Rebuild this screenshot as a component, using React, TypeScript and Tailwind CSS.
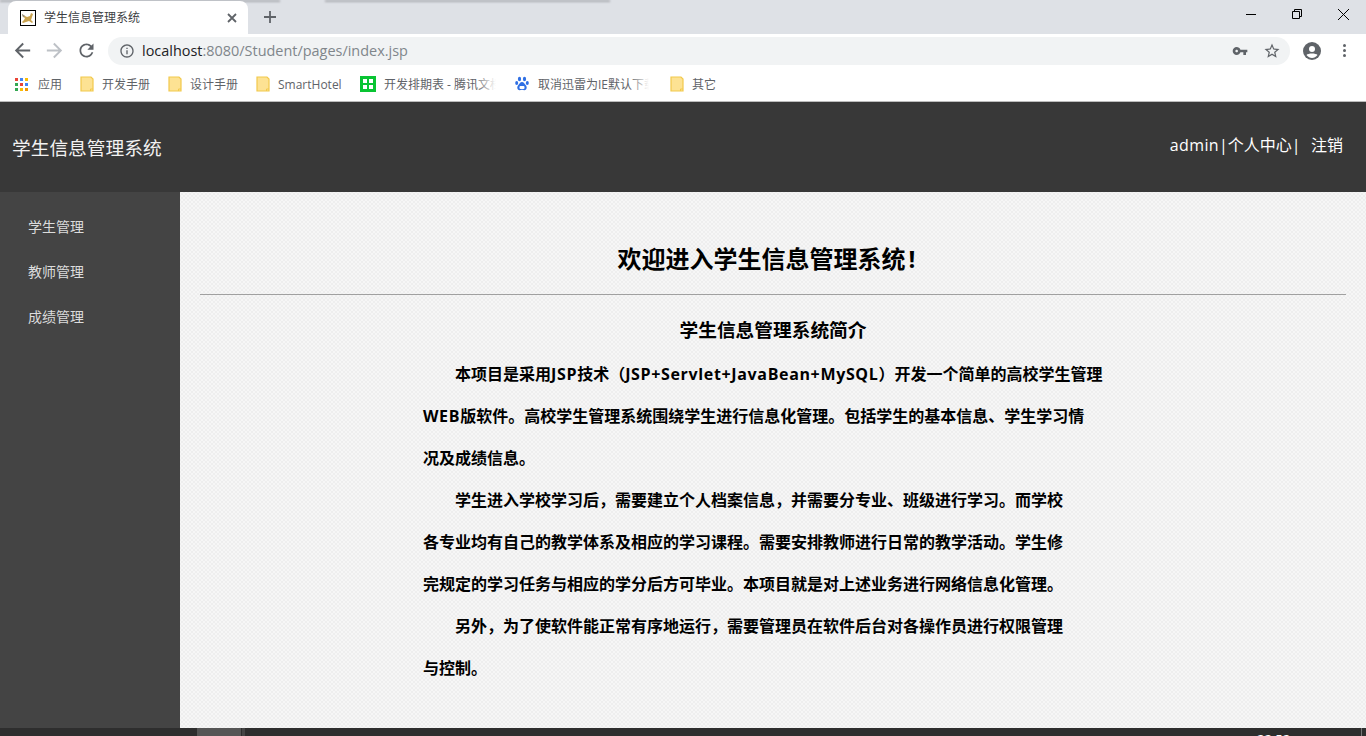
import React from 'react';

const cjk = "font-['Open_Sans','Noto_Sans_CJK_SC',sans-serif]";

const paragraphs = [
  [
    '本项目是采用JSP技术（JSP+Servlet+JavaBean+MySQL）开发一个简单的高校学生管理',
    'WEB版软件。高校学生管理系统围绕学生进行信息化管理。包括学生的基本信息、学生学习情',
    '况及成绩信息。',
  ],
  [
    '学生进入学校学习后，需要建立个人档案信息，并需要分专业、班级进行学习。而学校',
    '各专业均有自己的教学体系及相应的学习课程。需要安排教师进行日常的教学活动。学生修',
    '完规定的学习任务与相应的学分后方可毕业。本项目就是对上述业务进行网络信息化管理。',
  ],
  ['另外，为了使软件能正常有序地运行，需要管理员在软件后台对各操作员进行权限管理', '与控制。'],
];

const Icon = ({ d, size, className }: { d: string; size: number; className?: string }) => (
  <svg width={size} height={size} viewBox="0 0 24 24" fill="currentColor" className={`shrink-0 ${className ?? ''}`}>
    <path d={d} />
  </svg>
);

const Line = ({ d, size, width = 1 }: { d: string; size: number; width?: number }) => (
  <svg width={size} height={size} viewBox={`0 0 ${size} ${size}`} fill="none" stroke="currentColor" strokeWidth={width} className="shrink-0">
    <path d={d} />
  </svg>
);

const backPath = 'M20 11H7.830l5.590-5.590L12 4l-8 8 8 8 1.410-1.410L7.830 13H20v-2z';
const forwardPath = 'M4 11h12.170l-5.590-5.590L12 4l8 8-8 8-1.410-1.410L16.170 13H4v-2z';
const reloadPath =
  'M17.650 6.350C16.200 4.900 14.210 4 12 4c-4.420 0-7.990 3.580-7.990 8s3.570 8 7.990 8c3.730 0 6.840-2.550 7.730-6h-2.080c-.82 2.330-3.040 4-5.650 4-3.310 0-6-2.690-6-6s2.690-6 6-6c1.660 0 3.140.69 4.220 1.780L13 11h7V4l-2.350 2.350z';
const infoPath =
  'M11 7h2v2h-2zm0 4h2v6h-2zm1-9C6.480 2 2 6.480 2 12s4.480 10 10 10 10-4.480 10-10S17.520 2 12 2zm0 18c-4.410 0-8-3.590-8-8s3.590-8 8-8 8 3.590 8 8-3.590 8-8 8z';
const starPath =
  'M22 9.240l-7.190-.62L12 2 9.190 8.630 2 9.240l5.460 4.730L5.820 21 12 17.270 18.180 21l-1.630-7.030L22 9.240zM12 15.400l-3.760 2.270 1-4.280-3.320-2.880 4.380-.38L12 6.100l1.710 4.040 4.380.38-3.320 2.880 1 4.280L12 15.400z';
const keyPath =
  'M12.650 10C11.830 7.670 9.610 6 7 6c-3.310 0-6 2.690-6 6s2.690 6 6 6c2.610 0 4.830-1.670 5.650-4H17v4h4v-4h2v-4H12.650zM7 14c-1.100 0-2-.9-2-2s.9-2 2-2 2 .9 2 2-.9 2-2 2z';

const Folder = () => (
  <svg width="14" height="16" viewBox="0 0 14 16" className="shrink-0">
    <path d="M1 1h10l2 2v12H1z" fill="#fde293" stroke="#f2c94c" strokeWidth="1.200" />
    <path d="M10.500 15v-2h2.500" fill="none" stroke="#f2c94c" />
  </svg>
);

const AppsIcon = () => {
  const colors = ['#ea4335', '#4285f4', '#fbbc04', '#34a853', '#ea4335', '#4285f4', '#34a853', '#fbbc04', '#f29900'];
  return (
    <div className="grid grid-cols-3 gap-[2px] w-[13px] shrink-0 mr-[2px]">
      {colors.map((c, i) => (
        <span key={i} className="w-[3px] h-[3px]" style={{ backgroundColor: c }} />
      ))}
    </div>
  );
};

const GreenGrid = () => (
  <div className="w-4 h-4 bg-[#09c433] grid grid-cols-2 gap-[2px] p-[3px] shrink-0">
    <span className="bg-white" />
    <span className="bg-white" />
    <span className="bg-white" />
    <span className="bg-white" />
  </div>
);

const Paw = () => (
  <svg width="14" height="16" viewBox="0 0 14 16" className="shrink-0 mr-[1px]">
    <g fill="#2f6fe4">
      <ellipse cx="4.500" cy="3" rx="1.600" ry="2.300" />
      <ellipse cx="9.500" cy="3" rx="1.600" ry="2.300" />
      <ellipse cx="1.700" cy="7" rx="1.500" ry="2" />
      <ellipse cx="12.300" cy="7" rx="1.500" ry="2" />
      <path d="M7 6c2 0 2.500 2 4 3.500 1.500 2 .5 5-2 4.700-1-.1-1.300-.4-2-.4s-1 .3-2 .4c-2.500.3-3.500-2.700-2-4.700C4.500 8 5 6 7 6z" />
    </g>
    <rect x="4.500" y="10" width="5" height="3" rx="1" fill="#fff" />
  </svg>
);

const Bookmark = ({ icon, label, width, fade }: { icon: React.ReactNode; label: string; width: number; fade?: boolean }) => (
  <div className="flex items-center gap-2 overflow-hidden relative" style={{ width }}>
    {icon}
    <span className="text-xs text-[#5f6368] whitespace-nowrap pt-[2px]">{label}</span>
    {fade && <span className="absolute right-0 top-0 bottom-0 w-5 bg-gradient-to-r from-transparent to-white" />}
  </div>
);

// latin runs sit a bit tighter in Open Sans than in the reference
const BodyLine = ({ text }: { text: string }) => (
  <>
    {text.split(/([A-Za-z+]+)/).map((part, i) =>
      i % 2 === 1 ? (
        <span key={i} className="tracking-[0.65px]">
          {part}
        </span>
      ) : (
        part
      )
    )}
  </>
);

const App = () => {
  return (
    <div className={`w-[1366px] h-[736px] overflow-hidden flex flex-col bg-white [text-spacing-trim:space-all] ${cjk}`}>
      {/* tab strip */}
      <div className="h-[34px] bg-[#dee1e6] flex items-end pl-2 relative shrink-0">
        <div className="absolute left-0 top-0 w-[280px] h-[2px] bg-[#a9abb0] blur-[1px]" />
        <div className="absolute left-[325px] top-0 w-[285px] h-[2px] bg-[#a9abb0] blur-[1px]" />
        <div className="w-[240px] h-[33px] bg-white rounded-t-lg flex items-center pl-[12px] pr-[10px] relative">
          <div className="w-4 h-4 border border-black bg-white shrink-0 flex items-center justify-center overflow-hidden">
            <svg width="14" height="14" viewBox="0 0 14 14">
              <path d="M1 3l3 2 2 1 3-1 1-3 2 1-1 3-1 3 2 2-1 1-3-2-3 1-3 1-1-1 2-2 1-2-2-1z" fill="#c9a24e" />
              <path d="M1 3l3 2-2 1z" fill="#8a8a8a" />
            </svg>
          </div>
          <span className="ml-2 text-xs text-[#3c4043] whitespace-nowrap">学生信息管理系统</span>
          <span className="ml-auto text-[#5f6368]">
            <Line size={12} width={1.800} d="M2 2l8 8M10 2l-8 8" />
          </span>
        </div>
        <span className="ml-[15px] mb-[10px] text-[#5f6368]">
          <Line size={14} width={1.800} d="M7 1v12M1 7h12" />
        </span>
        <div className="ml-auto h-[34px] flex items-start pt-[8px] text-black">
          <div className="w-[46px] flex justify-center"><Line size={12} d="M1 6.500h10" /></div>
          <div className="w-[46px] flex justify-center"><Line size={12} d="M1.500 3.500h7v7h-7zM3.500 3.500v-2h7v7h-2" /></div>
          <div className="w-[46px] flex justify-center"><Line size={13} d="M1 1l11 11M12 1L1 12" /></div>
        </div>
      </div>

      {/* toolbar */}
      <div className="h-[33px] flex items-center pl-[11px] pr-[14px] shrink-0">
        <Icon d={backPath} size={23} className="text-[#5f6368]" />
        <Icon d={forwardPath} size={23} className="ml-[9px] text-[#bdc1c6]" />
        <Icon d={reloadPath} size={21} className="ml-[10px] text-[#5f6368]" />
        <div className="ml-[11px] w-[1182px] h-[28px] rounded-full bg-[#f1f3f4] flex items-center pl-[11px] pr-[9px]">
          <Icon d={infoPath} size={16} className="text-[#5f6368]" />
          <span className="ml-[7px] text-[14.45px] font-['Open_Sans',sans-serif] text-[#80868b]">
            <span className="text-[#202124]">localhost</span>:8080/Student/pages/index.jsp
          </span>
          <Icon d={keyPath} size={16} className="ml-auto text-[#5f6368]" />
          <Icon d={starPath} size={18} className="ml-[15px] text-[#5f6368]" />
        </div>
        <svg width="18" height="18" viewBox="0 0 18 18" className="ml-[13px]">
          <circle cx="9" cy="9" r="9" fill="#5f6368" />
          <circle cx="9" cy="7" r="3" fill="#fff" />
          <path d="M3.500 13c1.500-2 9.500-2 11 0-1.500 2-3.500 3-5.500 3s-4-1-5.500-3z" fill="#fff" />
        </svg>
        <div className="ml-[22px] flex flex-col gap-[2px]">
          <span className="w-[3px] h-[3px] rounded-full bg-[#5f6368]" />
          <span className="w-[3px] h-[3px] rounded-full bg-[#5f6368]" />
          <span className="w-[3px] h-[3px] rounded-full bg-[#5f6368]" />
        </div>
      </div>

      {/* bookmarks */}
      <div className="h-[35px] flex items-center pl-[15px] border-b border-[#bcbcbc] shrink-0">
        <Bookmark icon={<AppsIcon />} label="应用" width={65} />
        <Bookmark icon={<Folder />} label="开发手册" width={88} />
        <Bookmark icon={<Folder />} label="设计手册" width={88} />
        <Bookmark icon={<Folder />} label="SmartHotel" width={104} />
        <Bookmark icon={<GreenGrid />} label="开发排期表 - 腾讯文档" width={136} fade />
        <div className="w-[19px]" />
        <Bookmark icon={<Paw />} label="取消迅雷为IE默认下载" width={134} fade />
        <div className="w-[21px]" />
        <Bookmark icon={<Folder />} label="其它" width={60} />
      </div>

      {/* header */}
      <header className="h-[90px] bg-[#383838] flex items-center justify-between pl-3 pr-[23px] shrink-0">
        <h1 className="text-[18.72px] text-[#f2f2f2] font-normal pt-[3px]">学生信息管理系统</h1>
        <div className="text-base text-white -mt-1 whitespace-pre">
          <span className="tracking-[0.4px]">admin</span>|个人中心|<span className="ml-[2px]">  注销</span>
        </div>
      </header>

      <div className="flex-1 flex min-h-0">
        <aside className="w-[180px] bg-[#444444] pt-3 shrink-0">
          {['学生管理', '教师管理', '成绩管理'].map(item => (
            <div key={item} className="h-[45px] flex items-center pl-7 text-sm text-[#dcdcdc]">
              {item}
            </div>
          ))}
        </aside>
        <main className="flex-1 bg-[#f6f6f6] bg-[radial-gradient(#eeeeee_1px,transparent_1px),radial-gradient(#eeeeee_1px,transparent_1px)] bg-[length:4px_4px] bg-[position:0_0,2px_2px] px-5 pt-[49px] text-black">
          <h2 className="text-2xl font-bold text-center leading-9 pr-[13px]">
            欢迎进入学生信息管理系统<span className="ml-[3px]">!</span>
          </h2>
          <hr className="mt-[17px] border-t border-[#a0a0a0]" />
          <h3 className="mt-[21px] text-[18.72px] font-bold text-center leading-7">学生信息管理系统简介</h3>
          <div className="mt-[9px] ml-[223px] text-base font-bold leading-[42px] whitespace-nowrap">
            {paragraphs.map((lines, p) =>
              lines.map((line, i) => (
                <p key={`${p}-${i}`} className={i === 0 ? 'pl-8' : ''}>
                  <BodyLine text={line} />
                </p>
              ))
            )}
          </div>
        </main>
      </div>

      {/* taskbar sliver */}
      <div className="h-2 bg-[#2e2e2e] flex shrink-0 relative overflow-hidden">
        <div className="ml-[197px] w-11 bg-[#555555]" />
        <div className="ml-[1px] w-[3px] bg-[#454545]" />
        <span className="absolute left-[1257px] top-[5px] text-[13px] leading-none text-white">22:52</span>
        <span className="absolute left-[1361px] top-0 bottom-0 w-px bg-[#777777]" />
      </div>
    </div>
  );
};

export default App;
